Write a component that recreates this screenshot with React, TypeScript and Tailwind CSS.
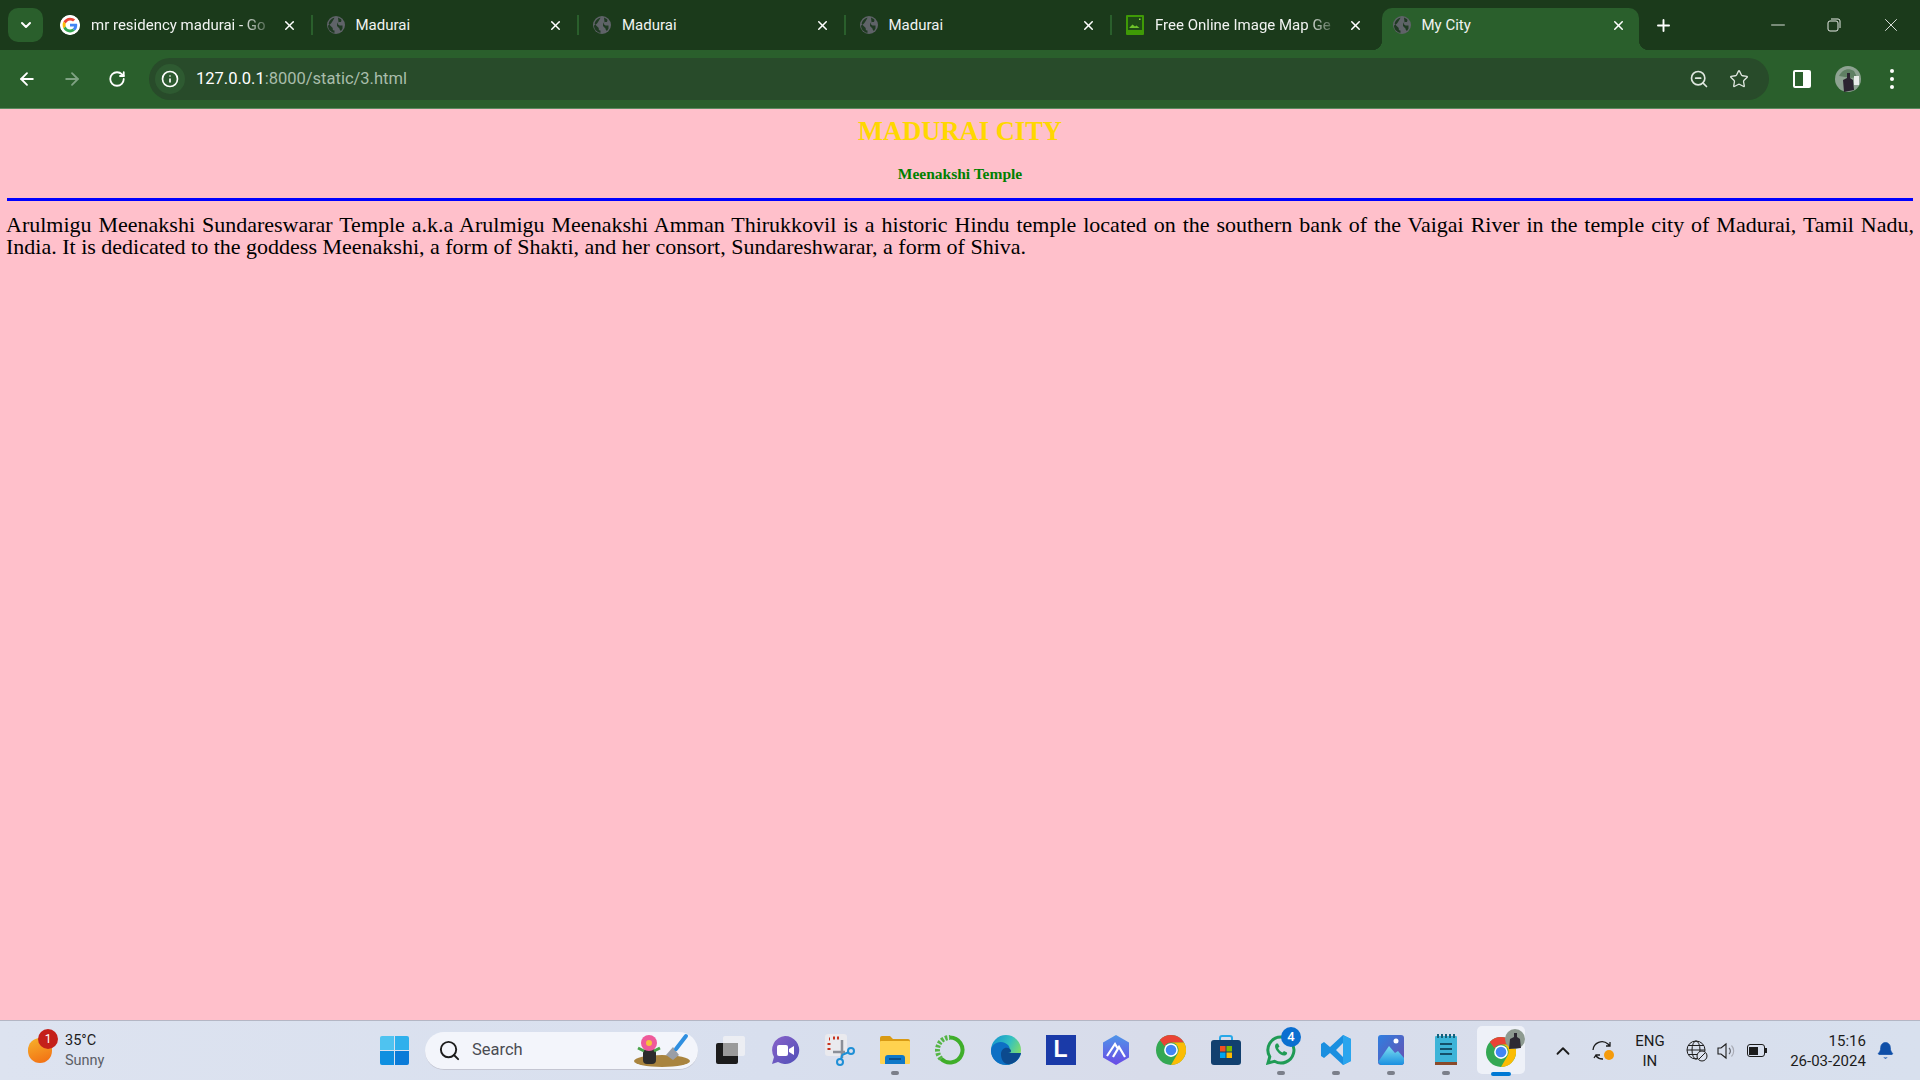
import React from 'react';
import { ArrowLeft, ArrowRight, RotateCw, Info, ZoomOut, Star, X, Plus, Minus, ChevronDown, ChevronUp, Search, Bell } from 'lucide-react';

const TABS = [
  { title: 'mr residency madurai - Go', icon: 'google', sep: true },
  { title: 'Madurai', icon: 'globe', sep: true },
  { title: 'Madurai', icon: 'globe', sep: true },
  { title: 'Madurai', icon: 'globe', sep: true },
  { title: 'Free Online Image Map Ge', icon: 'image' },
  { title: 'My City', icon: 'globe', active: true },
];

function GoogleIcon() {
  return (
    <svg width="20" height="20" viewBox="0 0 48 48" className="rounded-full bg-white shrink-0">
      <circle cx="24" cy="24" r="24" fill="#fff" />
      <path fill="#EA4335" d="M24 13c3 0 5.400 1 7.300 2.800l4.900-4.900C33 8 28.900 6.300 24 6.300c-6.900 0-12.900 4-15.800 9.800l5.700 4.400C15.300 16.200 19.300 13 24 13z" />
      <path fill="#4285F4" d="M41.300 24.400c0-1.300-.1-2.500-.3-3.700H24v7h9.900c-.4 2.300-1.700 4.200-3.600 5.500l5.500 4.300c3.300-3 5.500-7.400 5.500-13.100z" />
      <path fill="#FBBC05" d="M13.900 27.500c-.4-1.100-.6-2.300-.6-3.500s.2-2.400.6-3.500l-5.700-4.400C7 18.500 6.300 21.200 6.300 24s.7 5.500 1.900 7.900l5.700-4.400z" />
      <path fill="#34A853" d="M24 41.700c4.800 0 8.800-1.600 11.800-4.300l-5.500-4.300c-1.600 1.100-3.700 1.800-6.300 1.800-4.700 0-8.700-3.200-10.100-7.400l-5.700 4.400c2.900 5.800 8.900 9.800 15.800 9.800z" />
    </svg>
  );
}

function GlobeIcon() {
  return (
    <svg width="18" height="18" viewBox="0 0 18 18" className="shrink-0">
      <circle cx="9" cy="9" r="9" fill="#5f6368" />
      <path fill="#1f3a22" d="M7.500 1.800C4.500 2.400 2 5 1.700 8l4 4v1c0 1 1 1.500 1.800 1.500v2.200L7 16.800C3.600 16 1 13 1 9.500 5 8 6 4 7.500 1.800zM11 1.500c1 .5 2.500 1 3.500 2.500l-.5 2h-2.500l-1 2 2 1.500h3v3l-1.500 2.500c-.8-.5-1.500-1.500-1.500-2.500l-2.500-2.500V7.500l1.500-1.500z" />
    </svg>
  );
}

function ImageIcon() {
  return (
    <svg width="18" height="20" viewBox="0 0 18 20" className="shrink-0">
      <rect x="0" y="0" width="18" height="20" rx="1" fill="#3f9a06" />
      <rect x="2" y="2" width="14" height="13" fill="#1f4a16" />
      <path d="M3 13l3.500-3.500 2.500 2 1.500-1 3 2.500z" fill="#6fc22a" />
      <rect x="13" y="3.500" width="1.500" height="1.500" fill="#8edb45" />
    </svg>
  );
}

function Tab({ title, icon, active, sep }: { title: string; icon: string; active?: boolean; sep?: boolean }) {
  return (
    <div className={`relative flex h-[42px] w-[266.500px] shrink-0 items-center pb-[8px] pl-[14px] ${active ? 'pr-[19px]' : 'pr-[16px]'}`}>
      {active && (
        <div className="absolute bottom-0 left-[3px] right-[6px] top-0 rounded-t-[10px] bg-[#2a5f2c]">
          <div className="absolute -left-[10px] bottom-0 h-[10px] w-[10px] bg-[radial-gradient(circle_at_0_0,transparent_10px,#2a5f2c_10.500px)]" />
          <div className="absolute -right-[10px] bottom-0 h-[10px] w-[10px] bg-[radial-gradient(circle_at_100%_0,transparent_10px,#2a5f2c_10.500px)]" />
        </div>
      )}
      <div className="relative flex w-full items-center">
        {icon === 'google' && <GoogleIcon />}
        {icon === 'globe' && <GlobeIcon />}
        {icon === 'image' && <ImageIcon />}
        <span className={`ml-[11px] mr-auto whitespace-nowrap text-[15px] text-[#f1f3f1] ${icon === 'google' || icon === 'image' ? '[mask-image:linear-gradient(to_right,black_86%,#0004_100%)]' : ''}`}>
          {title}
        </span>
        <X size={15} strokeWidth={2.4} className="shrink-0 text-white" />
      </div>
      {sep && <div className="absolute right-0 top-[7px] h-[20px] w-[2px] bg-[#2a5f2c]" />}
    </div>
  );
}

function TabStrip() {
  return (
    <div className="flex h-[50px] items-end bg-[#1b3a1b]">
      <div className="mb-[8px] ml-[8px] mr-[3px] flex h-[34px] w-[35px] shrink-0 items-center justify-center rounded-[10px] bg-[#2a5f2c]">
        <ChevronDown size={16} strokeWidth={3} className="text-white" />
      </div>
      {TABS.map((t, i) => <Tab key={i} title={t.title} icon={t.icon} active={t.active} sep={t.sep} />)}
      <div className="mb-[13px] ml-[6px] flex h-[24px] w-[24px] shrink-0 items-center justify-center self-end">
        <Plus size={19} strokeWidth={2.4} className="text-white" />
      </div>
      <div className="flex-1" />
      <div className="mb-[14px] flex items-center pr-[18px] text-[#e8ece8]">
        <Minus size={22} strokeWidth={1} />
        <svg width="16" height="16" viewBox="0 0 16 16" className="ml-[37px]" fill="none" stroke="#e8ece8" strokeWidth="1">
          <rect x="2" y="4" width="10" height="10" rx="2" />
          <path d="M5 2h7a2 2 0 0 1 2 2v7" />
        </svg>
        <X size={22} strokeWidth={1} className="ml-[38px]" />
      </div>
    </div>
  );
}

function Toolbar() {
  return (
    <div className="flex h-[59px] items-center border-b border-b-[#5c8a60] bg-[#2a5f2c]">
      <ArrowLeft size={20} strokeWidth={2.2} className="ml-[17px] text-white" />
      <ArrowRight size={20} strokeWidth={2.2} className="ml-[25px] text-[#7fa283]" />
      <RotateCw size={18} strokeWidth={2.4} className="ml-[26px] text-white" />
      <div className="ml-[23px] flex h-[42px] w-[1620px] items-center rounded-full bg-[#284b2a]">
        <div className="ml-[6px] flex h-[30px] w-[30px] items-center justify-center rounded-full bg-[#2e5a31]">
          <Info size={18} strokeWidth={2.2} className="text-white" />
        </div>
        <span className="ml-[11px] mt-[1px] text-[16.500px] text-white">
          127.0.0.1<span className="text-[#a9bdab]">:8000/static/3.html</span>
        </span>
        <div className="flex-1" />
        <ZoomOut size={20} strokeWidth={2} className="text-[#dfe6df]" />
        <Star size={20} strokeWidth={1.600} className="ml-[20px] mr-[20px] text-[#dfe6df]" />
      </div>
      <div className="ml-[24px] flex h-[18px] w-[18px] justify-end rounded-[2px] border-2 border-white">
        <div className="h-full w-[6px] bg-white" />
      </div>
      <svg width="26" height="26" viewBox="0 0 26 26" className="ml-[24px]">
        <circle cx="13" cy="13" r="13" fill="#8ea392" />
        <path d="M4 10c3-6 9-9 15-5l3 6-6 1z" fill="#5f7f63" />
        <path d="M9 26l-1-12 4-2V7h3v5l3 2 1 10z" fill="#2b2430" />
        <rect x="19" y="10" width="5" height="9" fill="#e9ecea" />
      </svg>
      <div className="ml-[29px] flex flex-col gap-[4px]">
        <div className="h-[4px] w-[4px] rounded-full bg-white" />
        <div className="h-[4px] w-[4px] rounded-full bg-white" />
        <div className="h-[4px] w-[4px] rounded-full bg-white" />
      </div>
    </div>
  );
}

function Page() {
  return (
    <main className="flex-1 overflow-hidden bg-[#ffc0cb] pt-[7px] font-['Liberation_Serif',serif]">
      <h1 className="text-center text-[26.500px] font-bold leading-[30px] text-[#ffd700]">MADURAI CITY</h1>
      <h2 className="mt-[19px] text-center text-[15.500px] font-bold leading-[18px] text-[#008000]">Meenakshi Temple</h2>
      <hr className="mx-[7px] mt-[15px] h-[3px] border-0 bg-[#0000ff]" />
      <p className="mx-[6px] mt-[13px] text-justify text-[22px] leading-[22px] text-black">
        Arulmigu Meenakshi Sundareswarar Temple a.k.a Arulmigu Meenakshi Amman Thirukkovil is a historic Hindu temple located on the southern bank of the Vaigai River in the temple city of Madurai, Tamil Nadu, India. It is dedicated to the goddess Meenakshi, a form of Shakti, and her consort, Sundareshwarar, a form of Shiva.
      </p>
    </main>
  );
}

function ChromeLogo({ size = 30 }: { size?: number }) {
  return (
    <svg width={size} height={size} viewBox="0 0 48 48">
      <circle cx="24" cy="24" r="24" fill="#34a853" />
      <path d="M24 0a24 24 0 0 1 20.800 12H24a12 12 0 0 0-10.400 6L6.100 8A24 24 0 0 1 24 0z" fill="#ea4335" />
      <path d="M44.800 12A24 24 0 0 1 24 48l10.400-18A12 12 0 0 0 24 12z" fill="#fbbc04" />
      <circle cx="24" cy="24" r="11" fill="#fff" />
      <circle cx="24" cy="24" r="8.500" fill="#4285f4" />
    </svg>
  );
}

const TASK_APPS: { node: React.ReactNode; dot?: boolean; active?: boolean; key: string }[] = [
  {
    key: 'taskview',
    node: (
      <svg width="30" height="30" viewBox="0 0 30 30">
        <rect x="1" y="8" width="22" height="21" rx="2" fill="#1c1c1c" />
        <rect x="8" y="1" width="22" height="20" rx="2" fill="#f1f1f4" fillOpacity="0.8" />
        <rect x="8" y="8" width="15" height="13" fill="#9a9a9a" />
      </svg>
    ),
  },
  {
    key: 'chat',
    node: (
      <svg width="30" height="30" viewBox="0 0 30 30">
        <defs>
          <linearGradient id="chatg" x1="0" y1="0" x2="1" y2="1">
            <stop offset="0" stopColor="#8a63c9" />
            <stop offset="1" stopColor="#4f4fb8" />
          </linearGradient>
        </defs>
        <path d="M15 1a14 14 0 1 1-7 26l-6 2 2-7A14 14 0 0 1 15 1z" fill="url(#chatg)" />
        <rect x="7" y="10" width="11" height="11" rx="2" fill="#fff" />
        <path d="M19 14l5-3v9l-5-3z" fill="#fff" />
      </svg>
    ),
  },
  {
    key: 'snip',
    node: (
      <svg width="30" height="32" viewBox="0 0 30 32">
        <rect x="0" y="0" width="22" height="22" rx="3" fill="#eaeaee" />
        <path d="M4 5h1M8 4h2M12 4h2M4 9v2M4 14v2" stroke="#c8321e" strokeWidth="3" />
        <path d="M17 6v18M8 18h12" stroke="#8b8f98" strokeWidth="2.500" />
        <circle cx="26" cy="17" r="3" fill="none" stroke="#1f8fd6" strokeWidth="2" />
        <circle cx="15" cy="28" r="3" fill="none" stroke="#1f8fd6" strokeWidth="2" />
        <path d="M17 21l7-3M17 21l-1 5" stroke="#1f8fd6" strokeWidth="2" />
      </svg>
    ),
  },
  {
    key: 'files',
    dot: true,
    node: (
      <svg width="30" height="28" viewBox="0 0 30 28">
        <path d="M0 2a2 2 0 0 1 2-2h8l3 3h15a2 2 0 0 1 2 2v3H0z" fill="#d99a14" />
        <rect x="0" y="5" width="30" height="23" rx="1" fill="#ffd24f" />
        <path d="M5 28v-6a3 3 0 0 1 3-3h14a3 3 0 0 1 3 3v6z" fill="#0f78c8" />
        <rect x="9" y="22" width="12" height="2" fill="#0a4f8c" />
      </svg>
    ),
  },
  {
    key: 'ring',
    node: (
      <svg width="30" height="30" viewBox="0 0 30 30" fill="none">
        <path d="M15 2.500A12.500 12.500 0 1 1 6 23.700" stroke="#3fae2a" strokeWidth="4" />
        <path d="M6 23.700A12.500 12.500 0 0 1 15 2.500" stroke="#55b545" strokeWidth="5" strokeDasharray="2.500 1.500" />
      </svg>
    ),
  },
  {
    key: 'edge',
    node: (
      <svg width="30" height="30" viewBox="0 0 30 30">
        <defs>
          <linearGradient id="edgeg" x1="0" y1="0" x2="1" y2="0.500">
            <stop offset="0" stopColor="#0f8fd0" />
            <stop offset="0.600" stopColor="#35c1c0" />
            <stop offset="1" stopColor="#7fdc6a" />
          </linearGradient>
        </defs>
        <circle cx="15" cy="15" r="15" fill="url(#edgeg)" />
        <path d="M0 16C0 9 8 5 14 8c5 2 6 7 3 10h13c-1 7-8 12-15 12C7 30 0 24 0 16z" fill="#0d6fc4" />
        <path d="M10 19c0-5 5-8 9-5 2 2 1 4-2 4h13c-2 7-8 12-14 11-4-1-6-5-6-10z" fill="#0c4a8e" />
      </svg>
    ),
  },
  {
    key: 'lapp',
    node: (
      <div className="flex h-[30px] w-[30px] items-center justify-center bg-[#1a3aa8] font-['Liberation_Sans',sans-serif] text-[23px] font-bold leading-none text-white">L</div>
    ),
  },
  {
    key: 'hex',
    node: (
      <svg width="30" height="30" viewBox="0 0 30 30">
        <defs>
          <linearGradient id="hexg" x1="0" y1="0" x2="0" y2="1">
            <stop offset="0" stopColor="#4f95e8" />
            <stop offset="1" stopColor="#6a4ae6" />
          </linearGradient>
        </defs>
        <path d="M15 0l13 7.500v15L15 30 2 22.500v-15z" fill="url(#hexg)" />
        <path d="M6 21l8-12 3 5M12 22l6-10 6 10" fill="none" stroke="#fff" strokeWidth="2.200" />
      </svg>
    ),
  },
  { key: 'chrome', node: <ChromeLogo /> },
  {
    key: 'store',
    node: (
      <svg width="30" height="30" viewBox="0 0 30 30">
        <path d="M9 6V3a2 2 0 0 1 2-2h8a2 2 0 0 1 2 2v3" fill="none" stroke="#28a8e8" strokeWidth="2" />
        <rect x="0" y="5" width="30" height="25" rx="3" fill="#12406f" />
        <rect x="9" y="11" width="5.500" height="5.500" fill="#f25022" />
        <rect x="15.500" y="11" width="5.500" height="5.500" fill="#7fba00" />
        <rect x="9" y="17.500" width="5.500" height="5.500" fill="#00a4ef" />
        <rect x="15.500" y="17.500" width="5.500" height="5.500" fill="#ffb900" />
      </svg>
    ),
  },
  {
    key: 'whatsapp',
    dot: true,
    node: (
      <div className="relative">
        <svg width="30" height="30" viewBox="0 0 30 30">
          <path d="M15 2a13 13 0 1 1-6.500 24.300L2 28l1.800-6.300A13 13 0 0 1 15 2z" fill="none" stroke="#1f9b55" strokeWidth="3" />
          <path d="M10.500 8.500c-2 1.500-2 4 .5 7.500 3 4 6 5 8 4.500 1.500-.4 2.500-2 2-3l-3-1.500-1.500 1.500c-2-1-3.500-2.500-4.500-4.500l1.500-1.500-1.500-3z" fill="#1f9b55" />
        </svg>
        <div className="absolute -right-[5px] -top-[8px] flex h-[20px] w-[20px] items-center justify-center rounded-full bg-[#0a6fd0] text-[13px] font-medium text-white">4</div>
      </div>
    ),
  },
  {
    key: 'vscode',
    dot: true,
    node: (
      <svg width="30" height="30" viewBox="0 0 30 30">
        <path d="M22 0l8 4v22l-8 4L9 18l-6 5-3-2V9l3-2 6 5zm0 8l-7 7 7 7z" fill="#1a8fe0" fillRule="evenodd" />
        <path d="M22 0l8 4v22l-8 4z" fill="#2aa5ee" />
      </svg>
    ),
  },
  {
    key: 'photos',
    dot: true,
    node: (
      <svg width="26" height="30" viewBox="0 0 26 30">
        <defs>
          <linearGradient id="phg" x1="0" y1="0" x2="1" y2="1">
            <stop offset="0" stopColor="#2f7fe0" />
            <stop offset="1" stopColor="#6a4fb0" />
          </linearGradient>
          <linearGradient id="phm" x1="0" y1="0" x2="0" y2="1">
            <stop offset="0" stopColor="#7fe0f0" />
            <stop offset="1" stopColor="#1a8fe0" />
          </linearGradient>
        </defs>
        <rect x="0" y="0" width="26" height="30" rx="3" fill="url(#phg)" />
        <circle cx="18" cy="6" r="2.500" fill="#fff" />
        <path d="M0 27L11 11l6 7 3-2 6 7v4a3 3 0 0 1-3 3H3z" fill="url(#phm)" />
      </svg>
    ),
  },
  {
    key: 'notepad',
    dot: true,
    node: (
      <svg width="22" height="32" viewBox="0 0 22 32">
        <rect x="0" y="2" width="22" height="27" rx="1" fill="#3db4d8" />
        <path d="M3 0v4M7 0v4M11 0v4M15 0v4M19 0v4" stroke="#14607a" strokeWidth="2" />
        <path d="M5 10h12M5 15h12M5 20h12" stroke="#14506a" strokeWidth="2" />
        <rect x="0" y="28" width="22" height="3" fill="#8a4a2a" />
      </svg>
    ),
  },
  {
    key: 'chrome2',
    active: true,
    node: (
      <div className="relative mt-[4px]">
        <ChromeLogo />
        <svg width="20" height="20" viewBox="0 0 20 20" className="absolute -right-[9px] -top-[8px]">
          <circle cx="10" cy="10" r="10" fill="#8d9a90" />
          <path d="M4 20l1-10 4-2V4h3v4l3 2 1 9z" fill="#2d2a33" />
        </svg>
      </div>
    ),
  },
];

function Taskbar() {
  return (
    <footer className="flex h-[60px] items-center border-t border-t-[#b4b6c4] bg-[linear-gradient(90deg,#dde3f0,#d8dfee_40%,#d8dcea_60%,#d8e0ee)] font-['Roboto',sans-serif] text-[#1c1c1c]">
      {/* weather */}
      <div className="relative flex w-[366.500px] shrink-0 items-center pl-[28px]">
        <div className="h-[25px] w-[24px] rounded-full bg-[linear-gradient(160deg,#f7b32b,#f26b12)]" />
        <div className="absolute left-[38px] top-[-2px] flex h-[20px] w-[20px] items-center justify-center rounded-full bg-[#c4201a] text-[12px] text-white">1</div>
        <div className="ml-[13px] flex flex-col text-[14.500px] leading-[20px]">
          <span>35°C</span>
          <span className="text-[#5c5f66]">Sunny</span>
        </div>
      </div>
      {/* start */}
      <div className="flex w-[55px] shrink-0 justify-center">
        <div className="grid h-[29px] w-[29px] grid-cols-2 gap-[1px]">
          <div className="rounded-tl-[2px] bg-[#4fc3f0]" />
          <div className="rounded-tr-[2px] bg-[#2fb0ec]" />
          <div className="rounded-bl-[2px] bg-[#0f8fe0]" />
          <div className="rounded-br-[2px] bg-[#0a7bd8]" />
        </div>
      </div>
      {/* search */}
      <div className="flex w-[281px] shrink-0 justify-center pl-[3.500px] pr-[4.500px]">
        <div className="flex h-[38px] w-full items-center rounded-full border-b border-b-[#c4c6d2] bg-[#f3f5fb] pl-[13px] pr-[7px]">
          <Search size={23} strokeWidth={2} className="text-[#1c1c1c]" />
          <span className="ml-[11px] mt-[1px] text-[16.500px] text-[#4a4c52]">Search</span>
          <div className="flex-1" />
          <svg width="58" height="34" viewBox="0 0 58 34">
            <ellipse cx="29" cy="28" rx="28" ry="6" fill="#a9843f" />
            <rect x="10" y="16" width="13" height="15" rx="4" fill="#2c2c2c" />
            <circle cx="16" cy="10" r="8" fill="#ef5a9a" />
            <circle cx="16" cy="10" r="3" fill="#f7c23c" />
            <path d="M5 15l6 3M27 15l-6 3" stroke="#4aa34a" strokeWidth="3" />
            <path d="M33 22l7-8 6 8-6 5z" fill="#9a9ea6" />
            <path d="M43 16L53 3" stroke="#2f8fe0" strokeWidth="4" strokeLinecap="round" />
          </svg>
        </div>
      </div>
      {/* apps */}
      {TASK_APPS.map((a) => (
        <div key={a.key} className="relative flex h-[60px] w-[55.100px] shrink-0 items-center justify-center pb-[2px]">
          {a.active && <div className="absolute left-[3.500px] top-[5px] h-[48px] w-[48px] rounded-[5px] bg-[#eef1f8]" />}
          <div className="relative">{a.node}</div>
          {a.dot && <div className="absolute bottom-[6px] left-[23.500px] h-[4px] w-[8px] rounded-full bg-[#7b7f8a]" />}
          {a.active && <div className="absolute bottom-[5px] left-[17.500px] h-[4px] w-[20px] rounded-full bg-[#0078d4]" />}
        </div>
      ))}
      {/* tray */}
      <ChevronUp size={22} strokeWidth={2} className="ml-[23px] shrink-0" />
      <svg width="24" height="24" viewBox="0 0 24 24" fill="none" stroke="#1c1c1c" strokeWidth="1.300" className="ml-[17px] shrink-0">
        <path d="M2 11a9 9 0 0 1 15-6l2 2M19 3v4h-4M3 19l2-3h4M5 17a9 9 0 0 0 7 3" />
        <circle cx="18" cy="16" r="5" fill="#f59b0b" stroke="none" />
      </svg>
      <div className="ml-[15px] flex w-[40px] shrink-0 flex-col items-center text-[15px] leading-[20px]">
        <span>ENG</span>
        <span>IN</span>
      </div>
      <svg width="22" height="22" viewBox="0 0 22 22" fill="none" stroke="#1c1c1c" strokeWidth="1" className="ml-[16px] shrink-0">
        <circle cx="10" cy="10" r="9" />
        <ellipse cx="10" cy="10" rx="4" ry="9" />
        <path d="M1 10h18M2 5.500h16M2 14.500h16" />
        <circle cx="16" cy="16" r="5" fill="#dde2ef" />
        <path d="M13 19l6-6" />
      </svg>
      <svg width="22" height="22" viewBox="0 0 22 22" fill="none" className="ml-[8px] shrink-0">
        <path d="M2 8h3l5-4v14l-5-4H2z" stroke="#1c1c1c" strokeWidth="1.100" />
        <path d="M13 8a4 4 0 0 1 0 6" stroke="#5c5f66" strokeWidth="1.100" />
        <path d="M15.500 5.500a8 8 0 0 1 0 11" stroke="#a8abb5" strokeWidth="1.100" />
      </svg>
      <div className="ml-[9px] flex h-[13px] w-[18px] shrink-0 items-center rounded-[3px] border-[1.500px] border-[#1c1c1c] p-[1.500px]">
        <div className="h-full w-[9px] bg-[#1c1c1c]" />
      </div>
      <div className="h-[5px] w-[2px] shrink-0 bg-[#1c1c1c]" />
      <div className="ml-[19px] flex w-[80px] shrink-0 flex-col items-end text-[15px] leading-[20px]">
        <span>15:16</span>
        <span className="whitespace-nowrap">26-03-2024</span>
      </div>
      <Bell size={19} fill="#0f4fa8" strokeWidth={1} className="ml-[10px] shrink-0 text-[#0f4fa8]" />
    </footer>
  );
}

export default function App() {
  return (
    <div className="flex h-screen w-screen flex-col overflow-hidden font-['Roboto',sans-serif]">
      <TabStrip />
      <Toolbar />
      <Page />
      <Taskbar />
    </div>
  );
}
